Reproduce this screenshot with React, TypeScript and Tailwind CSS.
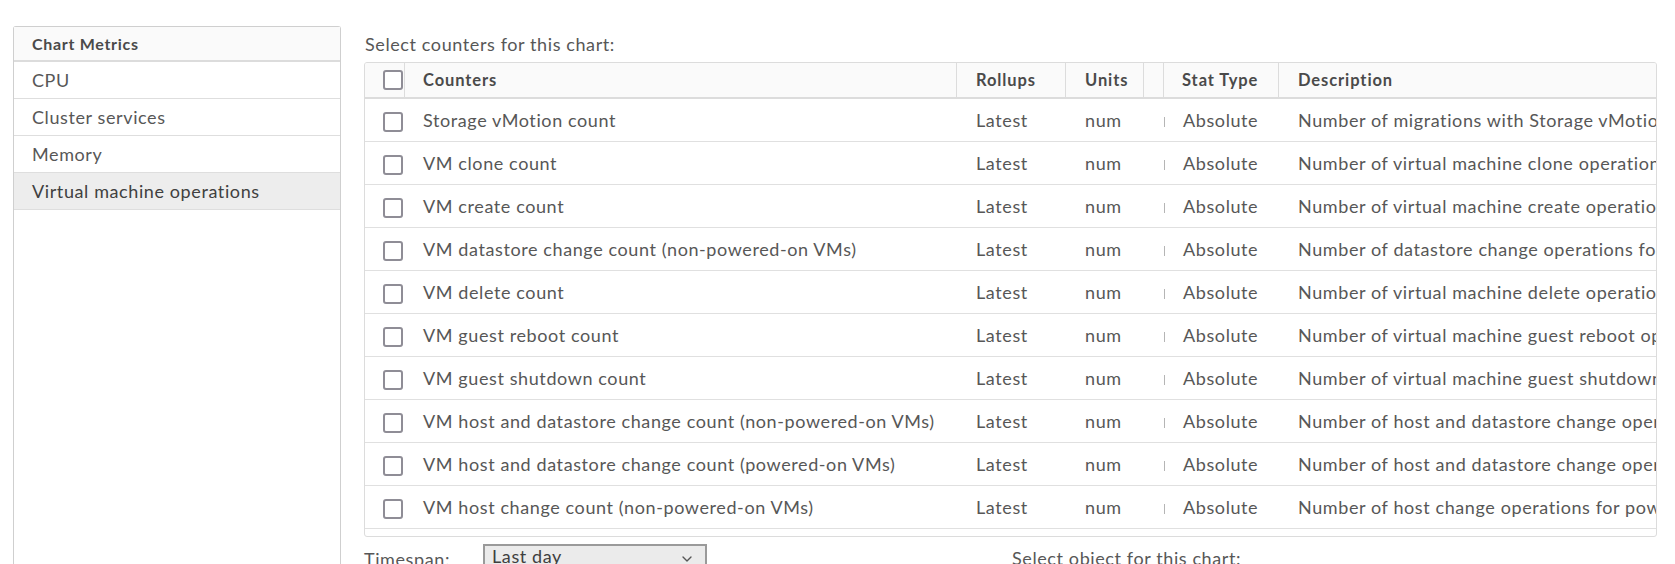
import { ChevronDown } from 'lucide-react'

const metrics = ['CPU', 'Cluster services', 'Memory', 'Virtual machine operations']

const counters: [string, string][] = [
  ['Storage vMotion count', 'Number of migrations with Storage vMotion (live disk migration)'],
  ['VM clone count', 'Number of virtual machine clone operations'],
  ['VM create count', 'Number of virtual machine create operations'],
  ['VM datastore change count (non-powered-on VMs)', 'Number of datastore change operations for powered-off and suspended virtual machines'],
  ['VM delete count', 'Number of virtual machine delete operations'],
  ['VM guest reboot count', 'Number of virtual machine guest reboot operations'],
  ['VM guest shutdown count', 'Number of virtual machine guest shutdown operations'],
  ['VM host and datastore change count (non-powered-on VMs)', 'Number of host and datastore change operations for powered-off and suspended virtual machines'],
  ['VM host and datastore change count (powered-on VMs)', 'Number of host and datastore change operations for powered-on and suspended virtual machines'],
  ['VM host change count (non-powered-on VMs)', 'Number of host change operations for powered-off and suspended VMs'],
  ['VM host change count (powered-on VMs)', 'Number of host change operations for powered-on VMs'],
]

const cols = 'grid grid-cols-[40px_552px_109px_78px_20px_115px_minmax(0,1fr)]'

function Checkbox() {
  return <div className="h-[20px] w-[20px] rounded-[3px] border-2 border-[#8f8d96] bg-white" />
}

export default function App() {
  return (
    <div className="flex h-[564px] overflow-hidden bg-white text-[#575757] tracking-[0.6px] [font-family:Lato,'Open_Sans',sans-serif]">
      {/* metric list */}
      <aside className="ml-[13px] mt-[26px] w-[328px] shrink-0 rounded-t-[3px] border border-b-0 border-[#cfcfcf]">
        <div className="flex h-[35px] items-center border-b-2 border-[#dcdcdc] bg-[#fafafa] pl-[18px] text-[16px] font-bold tracking-[0.7px] text-[#4a4a4a]">
          Chart Metrics
        </div>
        {metrics.map((m) => (
          <div
            key={m}
            className={`flex h-[37px] items-center border-b border-[#dedede] pl-[18px] text-[18px] ${
              m === 'Virtual machine operations' ? 'bg-[#ededed] text-[#404040]' : ''
            }`}
          >
            {m}
          </div>
        ))}
      </aside>

      {/* counters */}
      <section className="ml-[23px] mt-[26px] flex w-[1293px] shrink-0 flex-col">
        <div className="flex h-[36px] shrink-0 items-center pl-px text-[18px]">Select counters for this chart:</div>

        <div className="shrink-0 overflow-hidden rounded-[3px] border border-[#dcdcdc]">
          <div className={`${cols} h-[36px] border-b-2 border-[#dcdcdc] bg-[#fafafa] text-[16.5px] font-bold tracking-[0.9px] text-[#4a4a4a]`}>
            <div className="flex items-center border-r border-[#dcdcdc] pl-[18px]">
              <Checkbox />
            </div>
            <div className="flex items-center border-r border-[#dcdcdc] pl-[18px]">Counters</div>
            <div className="flex items-center border-r border-[#dcdcdc] pl-[19px]">Rollups</div>
            <div className="flex items-center border-r border-[#dcdcdc] pl-[19px]">Units</div>
            <div className="border-r border-[#dcdcdc]" />
            <div className="flex items-center border-r border-[#dcdcdc] pl-[18px]">Stat Type</div>
            <div className="flex items-center pl-[19px]">Description</div>
          </div>

          <div className="h-[437px] overflow-hidden">
            {counters.map(([name, desc]) => (
              <div key={name} className={`${cols} h-[43px] border-b border-[#e0e0e0] text-[18px]`}>
                <div className="flex items-center pl-[18px] pt-[3px]">
                  <Checkbox />
                </div>
                <div className="flex items-center whitespace-nowrap pl-[18px]">{name}</div>
                <div className="flex items-center pl-[19px]">Latest</div>
                <div className="flex items-center pl-[19px]">num</div>
                <div />
                <div className="flex items-center">
                  <div className="mt-[3px] h-[10px] w-px bg-[#b5b5b5]" />
                  <span className="ml-[18px]">Absolute</span>
                </div>
                <div className="flex items-center overflow-hidden whitespace-nowrap pl-[19px]">{desc}</div>
              </div>
            ))}
          </div>
        </div>

        <div className="mt-[7px] flex shrink-0 items-start text-[18px] leading-none">
          <span className="mt-[6px] w-[119px] shrink-0">Timespan:</span>
          <div className="flex h-[34px] w-[224px] shrink-0 items-start justify-between border-2 border-[#9a9a9a] bg-[#ebebeb] pl-[7px] pr-[10px] pt-[1px] text-[#3f3f3f]">
            <span>Last day</span>
            <ChevronDown size={16} strokeWidth={2} className="mt-[4px] text-[#555]" />
          </div>
          <span className="ml-[305px] mt-[5px] whitespace-nowrap">Select object for this chart:</span>
        </div>
      </section>
    </div>
  )
}
